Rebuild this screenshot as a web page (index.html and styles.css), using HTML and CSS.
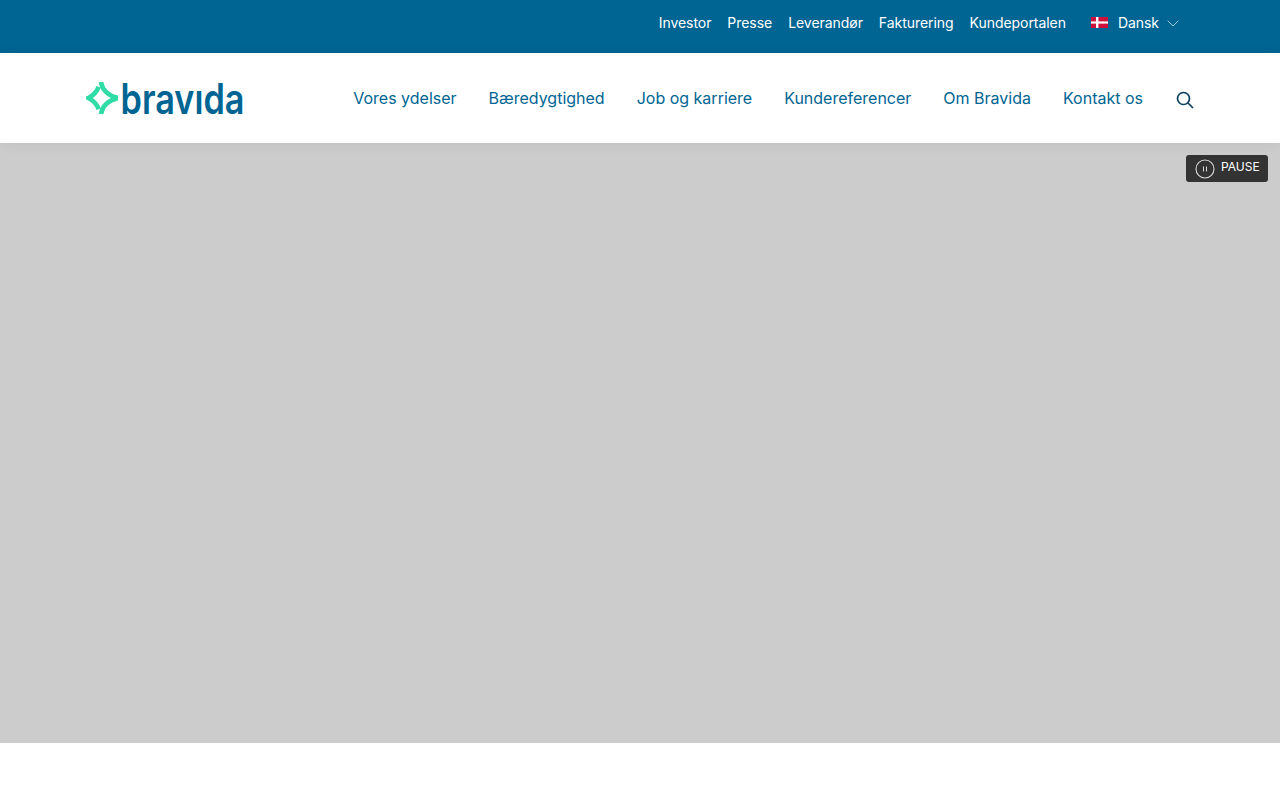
FILE: index.html
```html
<!DOCTYPE html>
<html lang="da">
<head>
<meta charset="utf-8">
<title>Bravida</title>
<link rel="stylesheet" href="styles.css">
</head>
<body>
<div class="topbar">
  <nav class="toplinks">
    <a href="#">Investor</a>
    <a href="#">Presse</a>
    <a href="#">Leverandør</a>
    <a href="#">Fakturering</a>
    <a href="#">Kundeportalen</a>
  </nav>
  <div class="lang">
    <svg class="flag" width="17" height="11" viewBox="0 0 17 11"><rect width="17" height="11" fill="#d0103a"/><rect x="5" width="2.4" height="11" fill="#fff"/><rect y="4.4" width="17" height="2.2" fill="#fff"/></svg>
    <span class="lang-name">Dansk</span>
    <svg class="chev" width="12" height="7" viewBox="0 0 12 7"><path d="M.7.8 6 6l5.3-5.2" fill="none" stroke="#a9c8d8" stroke-width="1"/></svg>
  </div>
</div>
<header class="mainbar">
  <a class="logo" href="#" aria-label="bravida">
    <svg class="mark" width="32" height="32" viewBox="0 0 33 33"><g fill="none" stroke="#2fdca6" stroke-width="4.800"><path d="M13 5C11 11 6.500 14.500 2.500 16.500 6.500 18.500 11 22 13 28"/><path d="M15.500 0C16.500 8 23 14.500 33 16.500"/><path d="M15.500 33C16.500 25 23 18.500 33 16.500"/></g></svg>
    <svg class="wordmark" width="122" height="32" viewBox="0 0 122 32"><text x="-1.500" y="32" textLength="124" lengthAdjust="spacingAndGlyphs">bravıda</text></svg>
  </a>
  <nav class="mainnav">
    <a href="#">Vores ydelser</a>
    <a href="#">Bæredygtighed</a>
    <a href="#">Job og karriere</a>
    <a href="#">Kundereferencer</a>
    <a href="#">Om Bravida</a>
    <a href="#">Kontakt os</a>
  </nav>
  <svg class="search" width="18" height="18" viewBox="0 0 18 18"><circle cx="7.500" cy="7.500" r="6" fill="none" stroke="#0a3f5f" stroke-width="1.700"/><path d="M12 12l5 5" stroke="#0a3f5f" stroke-width="1.700" fill="none"/></svg>
</header>
<main class="hero">
  <button class="pause" type="button">
    <svg width="20" height="20" viewBox="0 0 20 20"><circle cx="10" cy="10" r="9" fill="none" stroke="#d8d8d8" stroke-width="1.100"/><path d="M8.500 7.500v5M11.500 7.500v5" stroke="#d8d8d8" stroke-width="1"/></svg>
    <span>PAUSE</span>
  </button>
</main>
</body>
</html>
```
FILE: styles.css
```css
* { box-sizing: border-box; }
html, body { margin: 0; padding: 0; }
body { background: #fff; font-family: Inter, "Liberation Sans", sans-serif; height: 800px; overflow: hidden; }
a { text-decoration: none; color: inherit; }
.topbar { height: 53px; background: #006593; color: #fff; display: flex; align-items: center; justify-content: flex-end; padding: 0 101px 9px 0; font-size: 14px; letter-spacing: -.05px; }
.toplinks { display: flex; gap: 16px; }
.lang { display: flex; align-items: center; margin-left: 25px; }
.flag { display: block; }
.lang-name { margin-left: 10px; }
.chev { margin-left: 8px; margin-top: 2px; }
.mainbar { height: 90px; background: #fff; display: flex; align-items: center; padding: 0 86px; position: relative; z-index: 2; box-shadow: 0 1px 14px rgba(0,0,0,.06); }
.logo { display: flex; align-items: center; gap: 4px; margin-top: 0; }
.mark { display: block; }
.wordmark { display: block; overflow: visible; font-family: Inter, sans-serif; font-weight: 600; font-size: 42px; fill: #006593; }
.mainnav { display: flex; gap: 32px; margin-left: auto; font-size: 16px; color: #006593; }
.search { margin-left: 33px; margin-top: 4px; }
.hero { height: 600px; background: #ccc; position: relative; }
.pause { position: absolute; top: 12px; right: 12px; width: 82px; height: 27px; background: #333; color: #fff; border: 0; border-radius: 3px; display: flex; align-items: center; gap: 6px; padding: 0 0 0 9px; font-family: Inter, sans-serif; font-size: 12px; }
.pause span { margin-top: -5px; }
.pause svg { display: block; margin-top: 1px; }
```
